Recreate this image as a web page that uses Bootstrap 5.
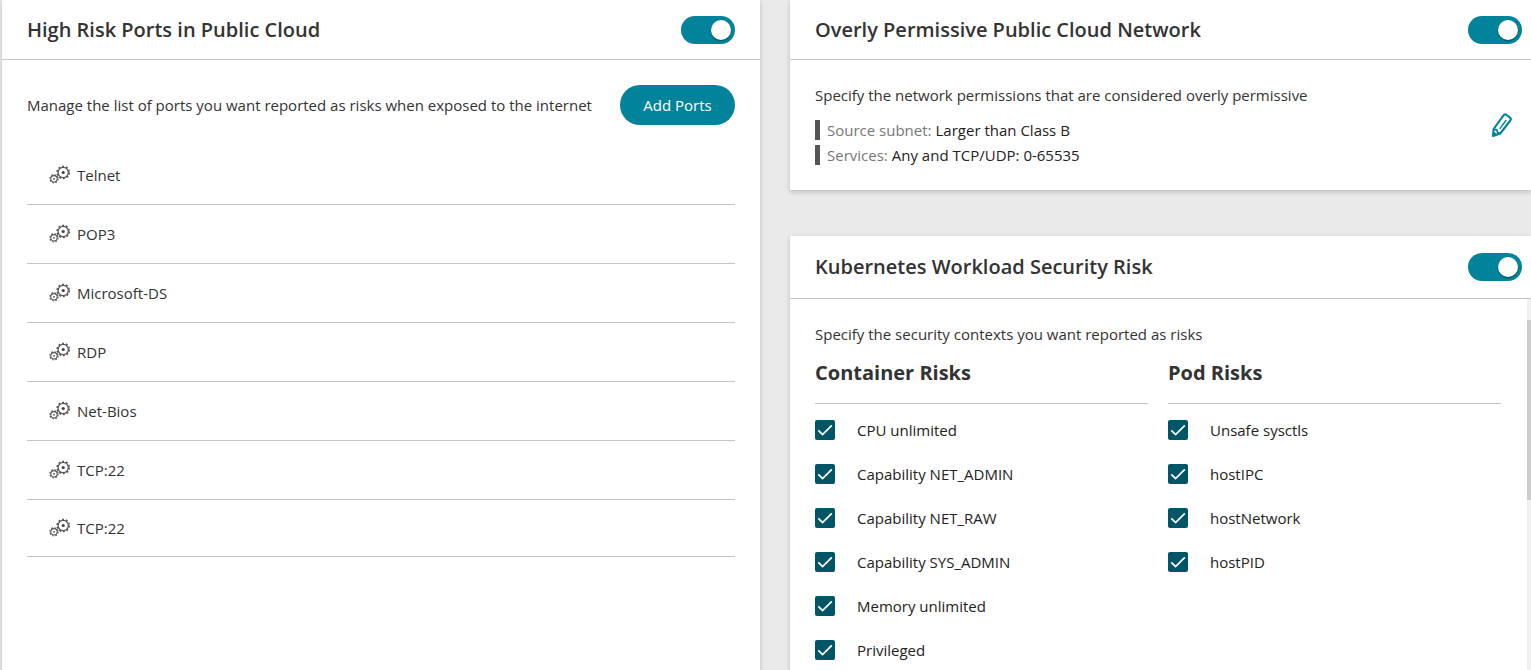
<!DOCTYPE html>
<html lang="en">
<head>
<meta charset="utf-8">
<meta name="viewport" content="width=device-width, initial-scale=1">
<title>Risk settings</title>
<link href="https://cdn.jsdelivr.net/npm/bootstrap@5.3.0/dist/css/bootstrap.min.css" rel="stylesheet">
<style>
  :root { --teal: #00839b; --line: #c6c6c6; }
  body { background: #eaeaea; color: #333; font-family: "Open Sans", "Noto Sans", sans-serif; font-size: 15px; line-height: 20px; }
  .board { display: grid; grid-template-columns: 758fr 741fr; column-gap: 30px; padding-left: 2px; height: 100vh; overflow: hidden; }
  .panel { background: #fff; box-shadow: 0 2px 5px rgba(0,0,0,.2); }
  .panel-head { height: 60px; padding: 0 25px; border-bottom: 1px solid var(--line); }
  .panel-head h2 { font-size: 20px; font-weight: 600; line-height: 28px; }
  .right-col { row-gap: 46px; }
  .right-col .panel-head { padding-right: 9px; }
  .k8s .panel-head { height: 63px; }
  .toggle.form-check-input { width: 54px; height: 28px; margin: 0; border: 0; border-radius: 14px; }
  .toggle.form-check-input:checked { background-color: var(--teal); background-position: right 3px center; background-size: 22px 24px;
    background-image: url("data:image/svg+xml,%3csvg xmlns='http://www.w3.org/2000/svg' viewBox='0 0 22 24'%3e%3ccircle cx='11' cy='13' r='10.5' fill='%23000' fill-opacity='.25'/%3e%3ccircle cx='11' cy='12' r='10' fill='%23fff'/%3e%3c/svg%3e"); }
  .btn-teal { --bs-btn-color: #fff; --bs-btn-bg: var(--teal); --bs-btn-hover-color: #fff; --bs-btn-hover-bg: #006f84; width: 115px; height: 40px; padding: 0; border: 0; font-size: 15px; }
  .intro { padding: 25px 25px 21px; }
  .ports { margin: 0 25px; }
  .ports li { height: 59px; border-bottom: 1px solid var(--line); padding-left: 22px; gap: 7px; }
  .ports li:last-child { height: 57px; }
  .facts { padding: 25px 18px 25px 25px; }
  .facts p, .contexts p { margin-bottom: 15px; }
  .fact { border-left: 5px solid #555; padding-left: 7px; margin-bottom: 5px; }
  .fact dt { color: #777; font-weight: 400; }
  .fact dd { color: #222; }
  .pencil { color: var(--teal); width: 22px; height: 26px; }
  .contexts { padding: 25px 26px 0 25px; }
  .risk-cols { column-gap: 20px; }
  .risk-cols h3 { font-size: 20px; font-weight: 700; line-height: 28px; padding-bottom: 16px; margin-bottom: 4px; border-bottom: 1px solid var(--line); }
  .risk { height: 44px; gap: 22px; color: #222; }
  .risk .form-check-input { width: 20px; height: 20px; margin: 0; border: 0; border-radius: 2px; }
  .risk .form-check-input:checked { background-color: #005566; background-size: 20px 20px;
    background-image: url("data:image/svg+xml,%3csvg xmlns='http://www.w3.org/2000/svg' viewBox='0 0 20 20'%3e%3cpath fill='none' stroke='%23fff' stroke-width='1.8' d='M3.3 10.3 7.6 14.6 16.8 5.4'/%3e%3c/svg%3e"); }
  .track { width: 4px; background: #f0f0f0; padding-top: 21px; }
  .thumb { height: 180px; background: #ccc; }
</style>
</head>
<body>
<svg class="d-none" aria-hidden="true">
  <symbol id="gears" viewBox="0 0 21 20">
    <g fill="none" stroke="#555">
      <circle cx="14.2" cy="7.5" r="5.1" stroke-width="1.2"/>
      <circle cx="14.2" cy="7.5" r="6.1" stroke-width="1.5" stroke-dasharray="2 1.833"/>
      <circle cx="5" cy="13.8" r="3.2" stroke-width="1.1"/>
      <circle cx="5" cy="13.8" r="4.1" stroke-width="1.2" stroke-dasharray="1.6 1.62"/>
    </g>
    <circle cx="14.2" cy="7.5" r="1.6" fill="#444"/>
    <circle cx="5" cy="13.8" r=".9" fill="#444"/>
  </symbol>
</svg>
<main class="board">
  <section class="panel">
    <div class="panel-head d-flex align-items-center justify-content-between">
      <h2 class="m-0">High Risk Ports in Public Cloud</h2>
      <div class="form-switch p-0 m-0 d-flex"><input class="form-check-input toggle" type="checkbox" role="switch" aria-label="High Risk Ports in Public Cloud" checked></div>
    </div>
    <div class="intro d-flex align-items-center justify-content-between">
      <p class="m-0">Manage the list of ports you want reported as risks when exposed to the internet</p>
      <button type="button" class="btn btn-teal rounded-pill">Add Ports</button>
    </div>
    <ul class="ports list-unstyled">
      <li class="d-flex align-items-center"><svg width="21" height="20"><use href="#gears"/></svg><span>Telnet</span></li>
      <li class="d-flex align-items-center"><svg width="21" height="20"><use href="#gears"/></svg><span>POP3</span></li>
      <li class="d-flex align-items-center"><svg width="21" height="20"><use href="#gears"/></svg><span>Microsoft-DS</span></li>
      <li class="d-flex align-items-center"><svg width="21" height="20"><use href="#gears"/></svg><span>RDP</span></li>
      <li class="d-flex align-items-center"><svg width="21" height="20"><use href="#gears"/></svg><span>Net-Bios</span></li>
      <li class="d-flex align-items-center"><svg width="21" height="20"><use href="#gears"/></svg><span>TCP:22</span></li>
      <li class="d-flex align-items-center"><svg width="21" height="20"><use href="#gears"/></svg><span>TCP:22</span></li>
    </ul>
  </section>
  <div class="right-col d-flex flex-column">
    <section class="panel">
      <div class="panel-head d-flex align-items-center justify-content-between">
        <h2 class="m-0">Overly Permissive Public Cloud Network</h2>
        <div class="form-switch p-0 m-0 d-flex"><input class="form-check-input toggle" type="checkbox" role="switch" aria-label="Overly Permissive Public Cloud Network" checked></div>
      </div>
      <div class="facts d-flex align-items-center justify-content-between">
        <div>
          <p>Specify the network permissions that are considered overly permissive</p>
          <dl class="m-0">
            <div class="fact d-flex gap-1"><dt>Source subnet:</dt><dd class="m-0">Larger than Class B</dd></div>
            <div class="fact d-flex gap-1 mb-0"><dt>Services:</dt><dd class="m-0">Any and TCP/UDP: 0-65535</dd></div>
          </dl>
        </div>
        <button type="button" class="btn border-0 p-0 d-flex" aria-label="Edit">
          <svg class="pencil" viewBox="0 0 22 26" fill="none" stroke="currentColor" stroke-width="2.1" stroke-linejoin="round">
            <path d="M2 24 2.6 17 12.3 3.6Q13.7 1.7 15.6 3L18.8 5.3Q20.6 6.7 19.3 8.5L9.3 21.5Z"/>
            <path d="M2.8 17.2 5.8 17.9 6.6 20.6 9.3 21.3" stroke-width="1.8"/>
            <path d="M8.8 16.8 15.2 8" stroke-width="1.4"/>
            <path d="M2 24 2.4 20 6 22.4Z" fill="currentColor" stroke-width="1"/>
          </svg>
        </button>
      </div>
    </section>
    <section class="panel k8s d-flex flex-column flex-grow-1">
      <div class="panel-head d-flex align-items-center justify-content-between">
        <h2 class="m-0">Kubernetes Workload Security Risk</h2>
        <div class="form-switch p-0 m-0 d-flex"><input class="form-check-input toggle" type="checkbox" role="switch" aria-label="Kubernetes Workload Security Risk" checked></div>
      </div>
      <div class="d-flex flex-grow-1">
        <div class="contexts flex-grow-1">
          <p>Specify the security contexts you want reported as risks</p>
          <div class="risk-cols d-flex">
            <div class="w-50">
              <h3>Container Risks</h3>
              <div class="risk d-flex align-items-center"><input class="form-check-input" type="checkbox" id="cpu" checked><label for="cpu">CPU unlimited</label></div>
              <div class="risk d-flex align-items-center"><input class="form-check-input" type="checkbox" id="netadmin" checked><label for="netadmin">Capability NET_ADMIN</label></div>
              <div class="risk d-flex align-items-center"><input class="form-check-input" type="checkbox" id="netraw" checked><label for="netraw">Capability NET_RAW</label></div>
              <div class="risk d-flex align-items-center"><input class="form-check-input" type="checkbox" id="sysadmin" checked><label for="sysadmin">Capability SYS_ADMIN</label></div>
              <div class="risk d-flex align-items-center"><input class="form-check-input" type="checkbox" id="memory" checked><label for="memory">Memory unlimited</label></div>
              <div class="risk d-flex align-items-center"><input class="form-check-input" type="checkbox" id="privileged" checked><label for="privileged">Privileged</label></div>
            </div>
            <div class="w-50">
              <h3>Pod Risks</h3>
              <div class="risk d-flex align-items-center"><input class="form-check-input" type="checkbox" id="sysctls" checked><label for="sysctls">Unsafe sysctls</label></div>
              <div class="risk d-flex align-items-center"><input class="form-check-input" type="checkbox" id="hostipc" checked><label for="hostipc">hostIPC</label></div>
              <div class="risk d-flex align-items-center"><input class="form-check-input" type="checkbox" id="hostnetwork" checked><label for="hostnetwork">hostNetwork</label></div>
              <div class="risk d-flex align-items-center"><input class="form-check-input" type="checkbox" id="hostpid" checked><label for="hostpid">hostPID</label></div>
            </div>
          </div>
        </div>
        <div class="track"><div class="thumb"></div></div>
      </div>
    </section>
  </div>
</main>
<script src="https://cdn.jsdelivr.net/npm/bootstrap@5.3.0/dist/js/bootstrap.bundle.min.js"></script>
</body>
</html>
